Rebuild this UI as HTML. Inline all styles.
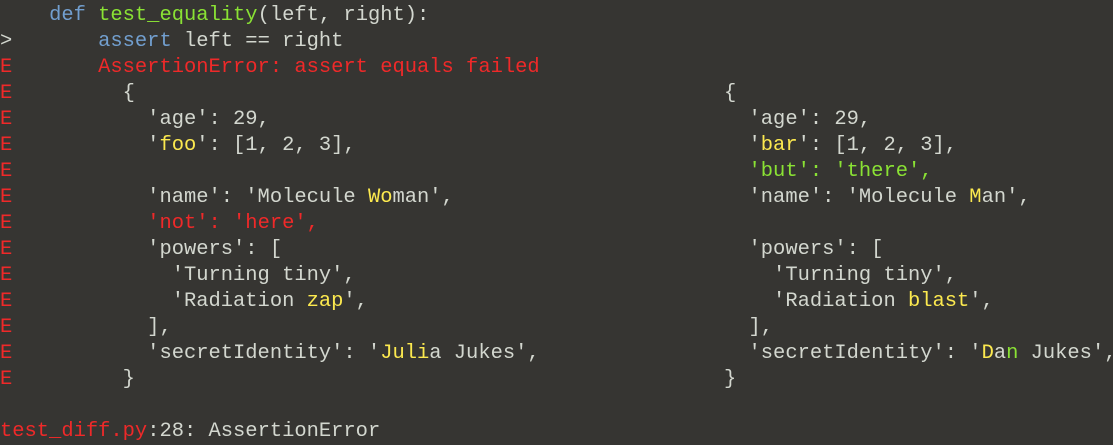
<!DOCTYPE html>
<html><head><meta charset="utf-8"><style>
html,body{margin:0;padding:0;background:#363532;width:1113px;height:445px;overflow:hidden}
pre{position:absolute;margin:0;font-family:"Liberation Mono",monospace;font-size:20.45px;line-height:26px;color:#d3d7cf;white-space:pre}
.b{color:#729fcf}.g{color:#8ae234}.r{color:#ef2929}.y{color:#fce94f}
</style></head><body>
<pre style="left:0;top:3px">    <span class="b">def</span> <span class="g">test_equality</span>(left, right):
&gt;       <span class="b">assert</span> left == right
<span class="r">E       AssertionError: assert equals failed</span>
<span class="r">E</span>         {
<span class="r">E</span>           'age': 29,
<span class="r">E</span>           '<span class="y">foo</span>': [1, 2, 3],
<span class="r">E</span>
<span class="r">E</span>           'name': 'Molecule <span class="y">Wo</span>man',
<span class="r">E</span>           <span class="r">'not': 'here',</span>
<span class="r">E</span>           'powers': [
<span class="r">E</span>             'Turning tiny',
<span class="r">E</span>             'Radiation <span class="y">zap</span>',
<span class="r">E</span>           ],
<span class="r">E</span>           'secretIdentity': '<span class="y">Juli</span>a Jukes',
<span class="r">E</span>         }

<span class="r">test_diff.py</span>:28: AssertionError</pre>
<pre style="left:724px;top:81px">{
  'age': 29,
  '<span class="y">bar</span>': [1, 2, 3],
  <span class="g">'but': 'there',</span>
  'name': 'Molecule <span class="y">M</span>an',

  'powers': [
    'Turning tiny',
    'Radiation <span class="y">blast</span>',
  ],
  'secretIdentity': '<span class="y">D</span>a<span class="g">n</span> Jukes',
}</pre>
</body></html>
